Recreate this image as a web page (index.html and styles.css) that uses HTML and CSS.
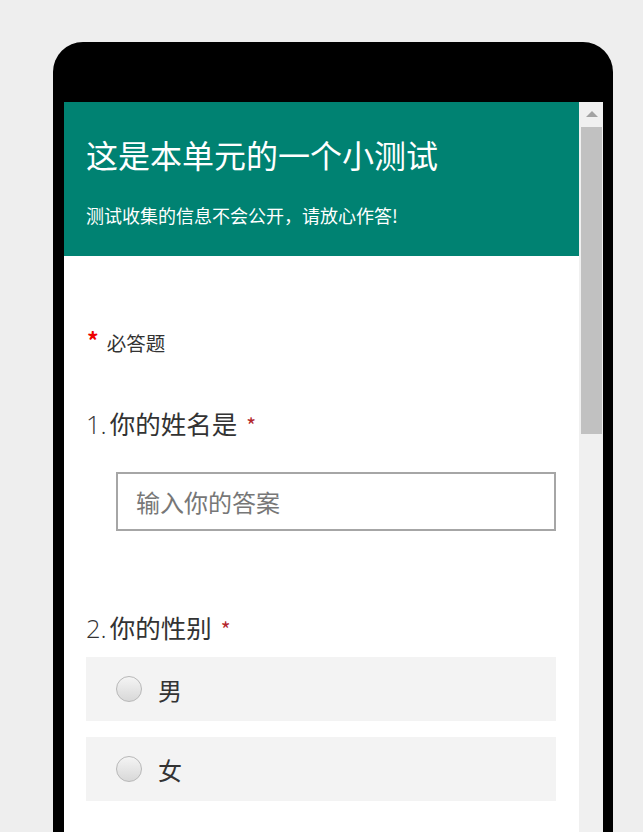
FILE: index.html
```html
<!DOCTYPE html>
<html>
<head>
    <meta charset="utf-8">
    <title>小测试</title>
    <link rel="stylesheet" href="styles.css">
</head>
<body>

<div id="phone">
    <div id="screen">
        <div id="form">
            <!--header block-->
            <div class="header">
                <p class="title">这是本单元的一个小测试</p>
                <p class="desc">测试收集的信息不会公开，请放心作答!</p>
            </div>

            <div class="body">
                <p class="required"><span class="star">*</span>必答题</p>

                <div class="question">
                    <p class="qtitle"><span class="num">1.</span>你的姓名是<span class="mark">*</span></p>
                    <div class="answer">
                        <input type="text" placeholder="输入你的答案">
                    </div>
                </div>

                <div class="question q2">
                    <p class="qtitle"><span class="num">2.</span>你的性别<span class="mark">*</span></p>
                    <label class="option"><span class="radio"></span>男</label>
                    <label class="option"><span class="radio"></span>女</label>
                </div>
            </div>
        </div>

        <!--fake scrollbar-->
        <div id="scrollbar">
            <div class="arrow"></div>
            <div class="thumb"></div>
        </div>
    </div>
</div>

</body>
</html>
```

FILE: styles.css
```css
body,p{ margin: 0;}
*{ margin: 0; padding: 0; box-sizing: border-box;}
body{ background: #eeeeee; height: 832px; overflow: hidden; font-family: "Noto Sans CJK SC", "Noto Sans", sans-serif;}

#phone{ width: 560px; height: 820px; margin: 42px 0 0 53px; padding: 60px 10px 0 11px; background: #000; border-radius: 30px 30px 0 0;}
#screen{ display: flex; height: 760px; background: #fff;}
#form{ flex: 1;}

/*header*/
.header{ height: 154px; background: #008272; color: #fff; padding: 32px 22px 0;}
.header .title{ font-size: 32px; line-height: 40px; font-weight: 400;}
.header .desc{ font-size: 18px; line-height: 24px; margin-top: 29px;}

/*body*/
.body{ padding: 0 23px 0 22px; color: #333;}
.required{ margin-top: 73px; font-size: 19.5px; line-height: 28px; display: flex; align-items: center;}
.required .star{ color: #e00; font-size: 23px; font-weight: 700; margin: 0 8px 0 1px; position: relative; top: -3px;}

.question .qtitle{ font-size: 25.5px; line-height: 32px; color: #333; display: flex; align-items: baseline;}
.question .num{ font-family: "Open Sans", sans-serif; font-weight: 300; margin-right: 3px;}
.question .mark{ color: #b3262c; font-size: 21px; margin-left: 9px;}
.question{ margin-top: 50px;}
.q2{ margin-top: 80px;}

.answer{ padding: 31px 0 0 30px;}
.answer input{ width: 440px; height: 59px; border: 2px solid #a6a6a6; padding: 0 18px; font: 24px "Noto Sans CJK SC", sans-serif; color: #333; outline: none;}
.answer input::placeholder{ color: #777;}

.option{ display: flex; align-items: center; height: 64px; background: #f3f3f3; margin-top: 16px; padding-left: 30px; font-size: 24px; color: #333;}
.q2 .qtitle + .option{ margin-top: 12px;}
.radio{ width: 26px; height: 26px; border-radius: 50%; border: 1px solid #b8b8b8; background: linear-gradient(#f4f4f4, #d8d8d8); margin-right: 16px;}

/*scrollbar*/
#scrollbar{ width: 24px; background: #f0f0f0; padding: 0 1px 0 2px;}
#scrollbar .arrow{ height: 25px; position: relative;}
#scrollbar .arrow:after{ content: ""; position: absolute; left: 5px; top: 9px; border: 6px solid transparent; border-top: none; border-bottom: 6px solid #a3a3a3;}
#scrollbar .thumb{ height: 307px; background: #c1c1c1;}
```
